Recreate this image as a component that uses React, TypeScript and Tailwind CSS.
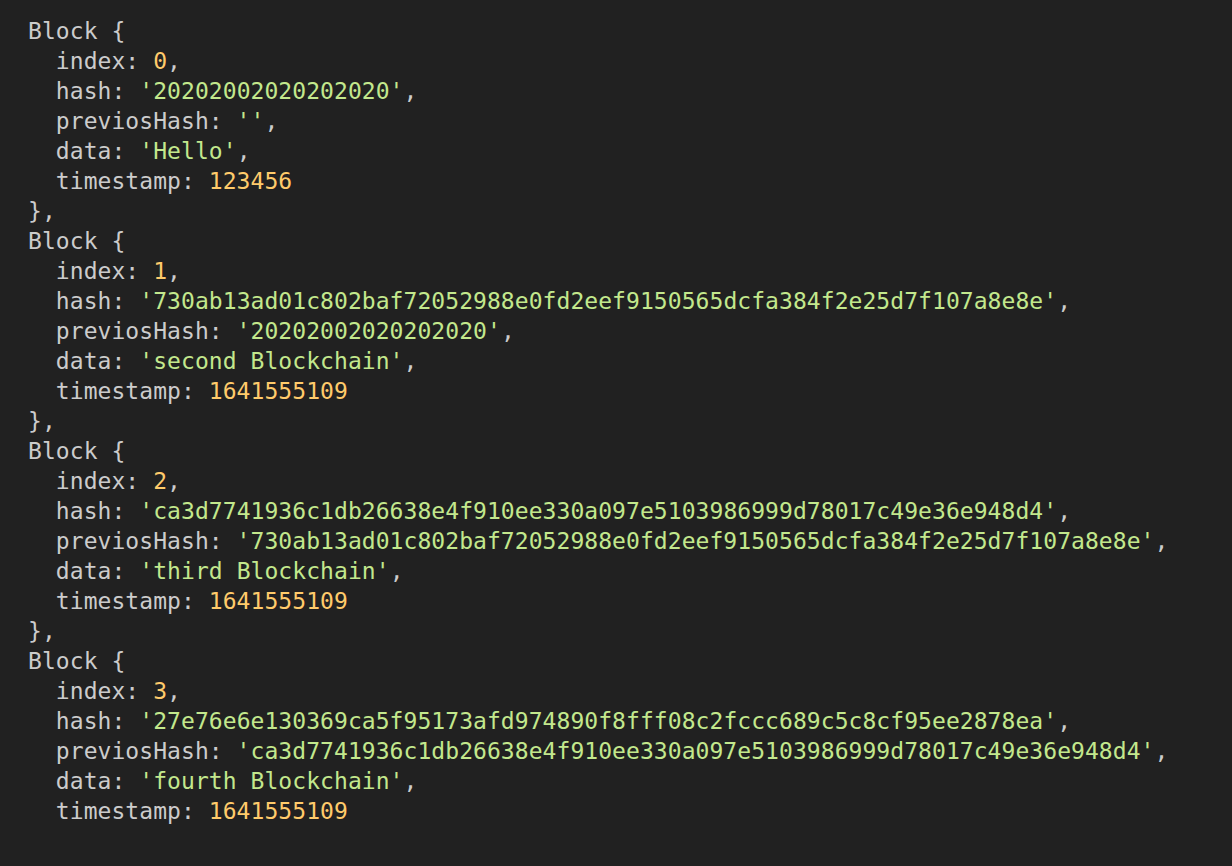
type Block = {
  index: number;
  hash: string;
  prev: string;
  data: string;
  timestamp: number;
};

const blocks: Block[] = [
  { index: 0, hash: '20202002020202020', prev: '', data: 'Hello', timestamp: 123456 },
  {
    index: 1,
    hash: '730ab13ad01c802baf72052988e0fd2eef9150565dcfa384f2e25d7f107a8e8e',
    prev: '20202002020202020',
    data: 'second Blockchain',
    timestamp: 1641555109,
  },
  {
    index: 2,
    hash: 'ca3d7741936c1db26638e4f910ee330a097e5103986999d78017c49e36e948d4',
    prev: '730ab13ad01c802baf72052988e0fd2eef9150565dcfa384f2e25d7f107a8e8e',
    data: 'third Blockchain',
    timestamp: 1641555109,
  },
  {
    index: 3,
    hash: '27e76e6e130369ca5f95173afd974890f8fff08c2fccc689c5c8cf95ee2878ea',
    prev: 'ca3d7741936c1db26638e4f910ee330a097e5103986999d78017c49e36e948d4',
    data: 'fourth Blockchain',
    timestamp: 1641555109,
  },
];

function Str({ v }: { v: string }) {
  return <span className="text-[#c3e88d]">'{v}'</span>;
}

function Num({ v }: { v: number }) {
  return <span className="text-[#ffcb6b]">{v}</span>;
}

export default function App() {
  return (
    <div className="min-h-[866px] w-full bg-[#212121] pt-4 pl-7 text-[23px] leading-[30px] tracking-[0.06px] text-[#cccccc] font-['DejaVu_Sans_Mono','Liberation_Mono',monospace] whitespace-pre">
      {blocks.map((b, i) => (
        <div key={i}>
          <div>Block {'{'}</div>
          <div>  index: <Num v={b.index} />,</div>
          <div>  hash: <Str v={b.hash} />,</div>
          <div>  previosHash: <Str v={b.prev} />,</div>
          <div>  data: <Str v={b.data} />,</div>
          <div>  timestamp: <Num v={b.timestamp} /></div>
          {i < blocks.length - 1 && <div>{'},'}</div>}
        </div>
      ))}
    </div>
  );
}
